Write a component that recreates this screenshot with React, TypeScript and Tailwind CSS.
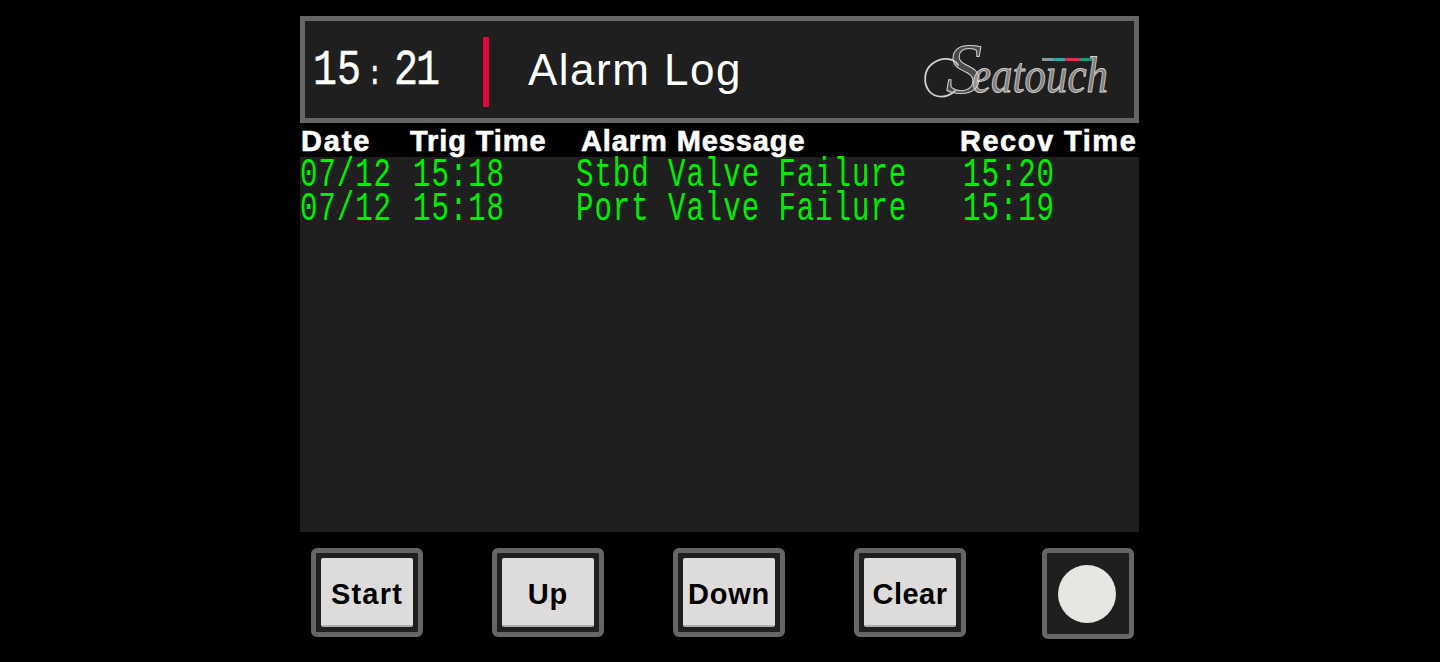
const mono = "font-['Liberation_Mono',monospace]";
const sans = "font-['Liberation_Sans',Arial,sans-serif]";

function Logo() {
  return (
    <svg width="205" height="70" viewBox="0 0 205 70" fill="none" aria-label="Seatouch" className="overflow-visible">
      <path d="M43 30 C38 22 26 22 17 29 C9 35 8 48 14 56 C21 64 32 63 40 56" stroke="#d3d1cd" strokeWidth="1.8" strokeLinecap="round" />
      <text x="31" y="58" fontFamily="'Liberation Serif', serif" fontStyle="italic" fontSize="72" fill="#d3d1cd" fillOpacity="0.25" stroke="#d3d1cd" strokeWidth="1">S</text>
      <text x="57" y="42" fontFamily="'Liberation Serif', serif" fontStyle="italic" fontSize="37" fill="#d3d1cd" fillOpacity="0.55" stroke="#d3d1cd" strokeWidth="0.7" textLength="136" lengthAdjust="spacingAndGlyphs" transform="scale(1 1.36)">eatouch</text>
      <rect x="127" y="23" width="11" height="3" fill="#8a9a9c" />
      <rect x="138" y="23" width="12" height="3" fill="#2aa6b8" />
      <rect x="150" y="23" width="15" height="3" fill="#d8324a" />
      <rect x="165" y="23" width="12" height="3" fill="#1f9a78" />
    </svg>
  );
}

function Btn({ label, track }: { label: string; track: string }) {
  return (
    <button className="w-[112px] h-[89px] shrink-0 rounded-[6px] border-[5px] border-[#666666] bg-[#1f1f1f] p-[5px]">
      <span className={`flex items-center justify-center h-full w-full pt-[6px] rounded-[2px] bg-[#dedcda] border-b-[2px] border-[#b0aeac] text-black font-bold text-[29px] ${track} ${sans}`}>
        {label}
      </span>
    </button>
  );
}

const rows = [
  ["07/12", "15:18", "Stbd Valve Failure", "15:20"],
  ["07/12", "15:18", "Port Valve Failure", "15:19"],
];

export default function App() {
  return (
    <div className="h-[662px] w-[1440px] overflow-hidden bg-black pl-[300px] pt-[16px]">
      <div className="w-[839px]">
        <header className="h-[107px] border-[5px] border-[#666666] bg-[#1f1f1f] flex items-center text-white">
          <div className={`w-[178px] pl-[8px] pt-[2px] flex items-baseline text-[40px] leading-none scale-y-[1.25] origin-center [-webkit-text-stroke:0.4px_white] ${mono}`}>
            <span>15</span>
            <span className="ml-[6px] w-[30px] text-[26px]">:</span>
            <span className="-ml-[3px] tracking-[-2px]">21</span>
          </div>
          <div className="h-[70px] w-[6px] mt-[4px] bg-[#e4063f]" />
          <div className={`ml-[39px] text-[44px] leading-none tracking-[1.5px] ${sans}`}>Alarm Log</div>
          <div className="ml-auto mr-[14px] flex items-center"><Logo /></div>
        </header>

        <div className={`h-[34px] pt-[3px] grid grid-cols-[109px_171px_379px_180px] items-center pl-[1px] bg-black text-white font-bold text-[29px] leading-none tracking-[0.9px] whitespace-pre [-webkit-text-stroke:0.6px_white] ${sans}`}>
          <span className="tracking-[1.8px]">Date</span>
          <span>Trig Time</span>
          <span>Alarm Message</span>
          <span className="tracking-[1.5px]">Recov Time</span>
        </div>

        <div className="h-[375px] pt-[1px] bg-[#1f1f1f] text-[#00ee00]">
          {rows.map((r, i) => (
            <div key={i} className={`h-[34px] grid grid-cols-[112px_164px_386px_177px] items-center text-[29px] tracking-[1px] leading-none whitespace-pre ${mono}`}>
              {r.map((c, j) => (
                <span key={j} className={j === 1 || j === 3 ? "pl-[1px] scale-y-[1.4]" : "scale-y-[1.4]"}>{c}</span>
              ))}
            </div>
          ))}
        </div>

        <div className="flex items-start pt-[16px] pl-[11px] gap-[69px]">
          <Btn label="Start" track="tracking-[1.2px]" />
          <Btn label="Up" track="tracking-[1px]" />
          <Btn label="Down" track="tracking-[0.8px]" />
          <Btn label="Clear" track="tracking-[0.5px]" />
          <div className="ml-[7px] w-[92px] h-[91px] shrink-0 rounded-[6px] border-[5px] border-[#666666] bg-[#1f1f1f] flex items-center justify-center pr-[2px]">
            <div className="w-[58px] h-[58px] rounded-full bg-[#e8e6e3]" />
          </div>
        </div>
      </div>
    </div>
  );
}
